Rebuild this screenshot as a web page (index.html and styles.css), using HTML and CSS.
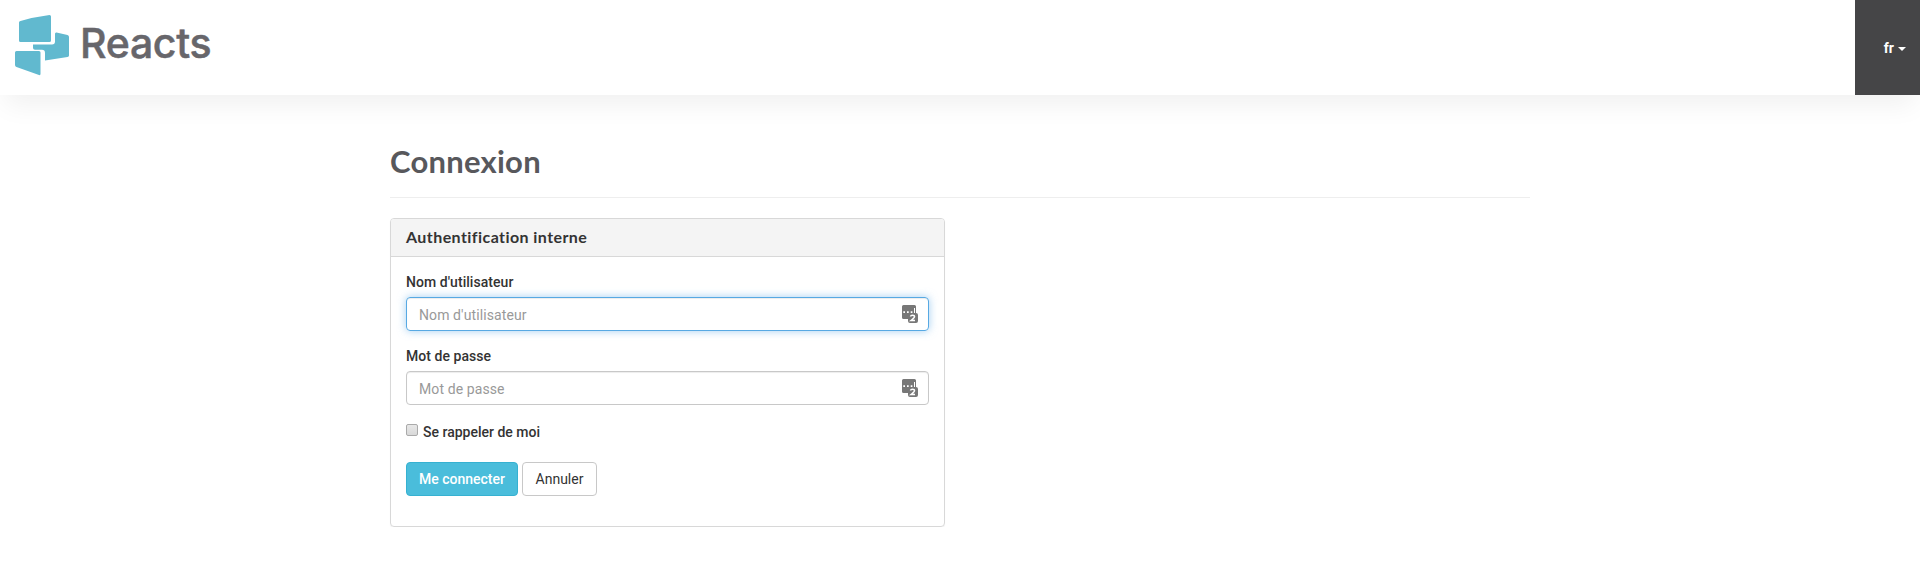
FILE: index.html
```html
<!DOCTYPE html>
<html lang="fr">
<head>
<meta charset="utf-8">
<title>Connexion - Reacts</title>
<link rel="stylesheet" href="styles.css">
</head>
<body>
<header class="topbar">
  <a class="brand">
    <svg class="brand-mark" width="54" height="61" viewBox="0 0 54 61">
      <path d="M5.500 6Q19 2 34.500 0Q36 0 36 1.500V25.500Q36 27 34.500 27H5.500Q4 27 4 25.500V7.500Q4 6.400 5.500 6Z"/>
      <path d="M41.500 17.500L52.500 20Q54 20.400 54 22V40.500Q54 41.800 52.500 42L30 45.500V38Q30 34.800 27 34.800H20Q18 34.800 18 33V29.500H37Q40 29.500 40 26.500V19Q40 17.200 41.500 17.500Z"/>
      <path d="M1.500 36H24Q25.500 36 25.500 37.500V59Q25.500 60.500 24 60L1.500 52Q0 51.500 0 50V37.500Q0 36 1.500 36Z"/>
    </svg>
    <span class="brand-name">Reacts</span>
  </a>
  <div class="lang"><span>fr</span><i class="caret"></i></div>
</header>
<main class="container">
  <h1 class="page-title">Connexion</h1>
  <section class="panel">
    <h2 class="panel-heading">Authentification interne</h2>
    <form class="panel-body">
      <label class="label" for="user">Nom d'utilisateur</label>
      <div class="field field-active">
        <input class="input" id="user" type="text" placeholder="Nom d'utilisateur">
        <svg class="key-icon" width="16" height="18" viewBox="0 0 16 18">
          <path fill="#777" d="M1.500 0H12.500Q14 0 14 1.500V8Q16 8 16 10V16Q16 18 14 18H8Q6 18 6 16V14H1.500Q0 14 0 12.500V1.500Q0 0 1.500 0Z"/>
          <path fill="#fff" d="M1.300 6.300h1.700v1.700H1.300zM5 6.300h1.700v1.700H5zM8.700 6.300h1.700v1.700H8.700zM12 3h1v5h-1z"/>
          <path fill="none" stroke="#fff" stroke-width="1.500" d="M8.500 11.500Q8.700 10.200 10.500 10.200Q12.500 10.200 12.500 11.700Q12.500 12.700 9 15.500H13"/>
        </svg>
      </div>
      <label class="label" for="pass">Mot de passe</label>
      <div class="field">
        <input class="input" id="pass" type="password" placeholder="Mot de passe">
        <svg class="key-icon" width="16" height="18" viewBox="0 0 16 18">
          <path fill="#777" d="M1.500 0H12.500Q14 0 14 1.500V8Q16 8 16 10V16Q16 18 14 18H8Q6 18 6 16V14H1.500Q0 14 0 12.500V1.500Q0 0 1.500 0Z"/>
          <path fill="#fff" d="M1.300 6.300h1.700v1.700H1.300zM5 6.300h1.700v1.700H5zM8.700 6.300h1.700v1.700H8.700zM12 3h1v5h-1z"/>
          <path fill="none" stroke="#fff" stroke-width="1.500" d="M8.500 11.500Q8.700 10.200 10.500 10.200Q12.500 10.200 12.500 11.700Q12.500 12.700 9 15.500H13"/>
        </svg>
      </div>
      <label class="remember"><input class="check" type="checkbox"><span>Se rappeler de moi</span></label>
      <div class="actions">
        <button class="btn btn-primary" type="button">Me connecter</button>
        <button class="btn btn-cancel" type="button">Annuler</button>
      </div>
    </form>
  </section>
</main>
</body>
</html>
```
FILE: styles.css
```css
* { box-sizing: border-box; }
body { margin: 0; background: #fff; color: #333; font: 14px/20px Roboto, sans-serif; overflow: hidden; }
.topbar { height: 95px; display: flex; justify-content: space-between; background: #fff; box-shadow: 0 15px 25px -5px rgba(0, 0, 0, .06); }
.brand { display: flex; align-items: flex-start; padding: 15px 0 0 15px; }
.brand-mark { fill: #61b9cf; }
.brand-name { margin: 4px 0 0 11px; font: 500 41px/48px Inter, sans-serif; letter-spacing: -.3px; color: #67666b; -webkit-text-stroke: .5px #67666b; }
.lang { width: 65px; padding: 1px 14px 0 0; display: flex; align-items: center; justify-content: flex-end; gap: 4px; background: #454547; color: #fff; font-weight: 700; }
.caret { border: 4px solid transparent; border-top-color: #fff; border-bottom: 0; margin-top: 2px; }
.container { width: 1140px; margin: 0 auto; }
.page-title { height: 103px; margin: 0 0 20px; padding-top: 48px; border-bottom: 1px solid #eee; color: #58585c; font: 700 31px/36px Lato, sans-serif; letter-spacing: .25px; }
.panel { width: 555px; height: 309px; border: 1px solid #d8d8d8; border-radius: 4px; box-shadow: 0 1px 1px rgba(0, 0, 0, .05); }
.panel-heading { height: 38px; margin: 0; padding: 8px 15px; border-bottom: 1px solid #d8d8d8; border-radius: 3px 3px 0 0; background: #f4f4f4; font: 700 16px/20px Lato, sans-serif; letter-spacing: .43px; }
.panel-body { padding: 15px; }
.label { display: block; height: 25px; font-weight: 500; letter-spacing: .05px; }
.field { height: 34px; margin-bottom: 15px; display: flex; align-items: center; padding: 0 10px 0 12px; border: 1px solid #c8c8c8; border-radius: 4px; box-shadow: inset 0 1px 1px rgba(0, 0, 0, .075); }
.field-active { border-color: #57a9e3; box-shadow: inset 0 1px 1px rgba(0, 0, 0, .075), 0 0 8px rgba(102, 175, 233, .6); }
.input { flex: 1; min-width: 0; padding: 2px 0 0; border: 0; outline: 0; background: none; font: 14px/20px Roboto, sans-serif; letter-spacing: .1px; }
.input::placeholder { color: #999; opacity: 1; }
.remember { display: flex; align-items: center; height: 20px; margin-top: 17px; font-weight: 500; }
.check { appearance: none; width: 12px; height: 12px; margin: 0 5px 4px 0; border: 1px solid #aaa; border-radius: 2px; background: linear-gradient(#e8e8e8, #d9d9d9); }
.actions { display: flex; gap: 4px; margin-top: 20px; }
.btn { height: 34px; padding: 0; border: 1px solid #c8c8c8; border-radius: 4px; background: #fff; color: #333; font: 14px/20px Roboto, sans-serif; }
.btn-primary { width: 112px; border-color: #36b1d1; background: #4abddb; color: #fff; font-weight: 500; }
.btn-cancel { width: 75px; }
```
